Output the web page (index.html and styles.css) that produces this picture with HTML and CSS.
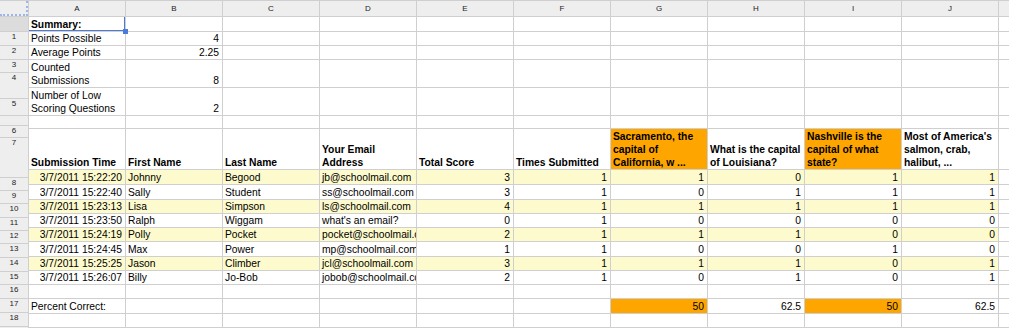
FILE: index.html
```html
<!DOCTYPE html>
<html>
<head>
<meta charset="utf-8">
<title>Form responses</title>
<link rel="stylesheet" href="styles.css">
</head>
<body>
<div class="sheet">
  <div class="gutter">
    <div class="g corner"></div>
    <div class="g dark g14"></div>
    <div class="g g13">1</div>
    <div class="g g13">2</div>
    <div class="g g12">3</div>
    <div class="g g25">4</div>
    <div class="g g16">5</div>
    <div class="g g9"></div>
    <div class="g g11">6</div>
    <div class="g g39">7</div>
    <div class="g g12">8</div>
    <div class="g g12">9</div>
    <div class="g g13">10</div>
    <div class="g g12">11</div>
    <div class="g g12">12</div>
    <div class="g g13">13</div>
    <div class="g g13">14</div>
    <div class="g g12">15</div>
    <div class="g g13">16</div>
    <div class="g g13">17</div>
    <div class="g g13">18</div>
    <div class="g rest"></div>
  </div>
  <div class="grid">
    <div class="row h15">
      <div class="ch">A</div><div class="ch">B</div><div class="ch">C</div><div class="ch">D</div><div class="ch">E</div><div class="ch">F</div><div class="ch">G</div><div class="ch">H</div><div class="ch">I</div><div class="ch">J</div><div class="ch"></div>
    </div>
    <div class="row h14">
      <div class="c b sel">Summary:</div><div class="c"></div><div class="c"></div><div class="c"></div><div class="c"></div><div class="c"></div><div class="c"></div><div class="c"></div><div class="c"></div><div class="c"></div><div class="c"></div>
    </div>
    <div class="row h13">
      <div class="c">Points Possible</div><div class="c n">4</div><div class="c"></div><div class="c"></div><div class="c"></div><div class="c"></div><div class="c"></div><div class="c"></div><div class="c"></div><div class="c"></div><div class="c"></div>
    </div>
    <div class="row h13">
      <div class="c">Average Points</div><div class="c n">2.25</div><div class="c"></div><div class="c"></div><div class="c"></div><div class="c"></div><div class="c"></div><div class="c"></div><div class="c"></div><div class="c"></div><div class="c"></div>
    </div>
    <div class="row h27">
      <div class="c">Counted<br>Submissions</div><div class="c n">8</div><div class="c"></div><div class="c"></div><div class="c"></div><div class="c"></div><div class="c"></div><div class="c"></div><div class="c"></div><div class="c"></div><div class="c"></div>
    </div>
    <div class="row h27">
      <div class="c">Number of Low<br>Scoring Questions</div><div class="c n">2</div><div class="c"></div><div class="c"></div><div class="c"></div><div class="c"></div><div class="c"></div><div class="c"></div><div class="c"></div><div class="c"></div><div class="c"></div>
    </div>
    <div class="row h12">
      <div class="c"></div><div class="c"></div><div class="c"></div><div class="c"></div><div class="c"></div><div class="c"></div><div class="c"></div><div class="c"></div><div class="c"></div><div class="c"></div><div class="c"></div>
    </div>
    <div class="row h40">
      <div class="c b">Submission Time</div>
      <div class="c b">First Name</div>
      <div class="c b">Last Name</div>
      <div class="c b">Your Email<br>Address</div>
      <div class="c b">Total Score</div>
      <div class="c b">Times Submitted</div>
      <div class="c b o">Sacramento, the<br>capital of<br>California, w ...</div>
      <div class="c b">What is the capital<br>of Louisiana?</div>
      <div class="c b o">Nashville is the<br>capital of what<br>state?</div>
      <div class="c b">Most of America's<br>salmon, crab,<br>halibut, ...</div>
      <div class="c"></div>
    </div>
    <div class="row h14 y">
      <div class="c n">3/7/2011 15:22:20</div><div class="c">Johnny</div><div class="c">Begood</div><div class="c">jb@schoolmail.com</div><div class="c n">3</div><div class="c n">1</div><div class="c n">1</div><div class="c n">0</div><div class="c n">1</div><div class="c n">1</div><div class="c k"></div>
    </div>
    <div class="row h14">
      <div class="c n">3/7/2011 15:22:40</div><div class="c">Sally</div><div class="c">Student</div><div class="c">ss@schoolmail.com</div><div class="c n">3</div><div class="c n">1</div><div class="c n">0</div><div class="c n">1</div><div class="c n">1</div><div class="c n">1</div><div class="c k"></div>
    </div>
    <div class="row h13 y">
      <div class="c n">3/7/2011 15:23:13</div><div class="c">Lisa</div><div class="c">Simpson</div><div class="c">ls@schoolmail.com</div><div class="c n">4</div><div class="c n">1</div><div class="c n">1</div><div class="c n">1</div><div class="c n">1</div><div class="c n">1</div><div class="c k"></div>
    </div>
    <div class="row h13">
      <div class="c n">3/7/2011 15:23:50</div><div class="c">Ralph</div><div class="c">Wiggam</div><div class="c">what's an email?</div><div class="c n">0</div><div class="c n">1</div><div class="c n">0</div><div class="c n">0</div><div class="c n">0</div><div class="c n">0</div><div class="c k"></div>
    </div>
    <div class="row h13 y">
      <div class="c n">3/7/2011 15:24:19</div><div class="c">Polly</div><div class="c">Pocket</div><div class="c">pocket@schoolmail.com</div><div class="c n">2</div><div class="c n">1</div><div class="c n">1</div><div class="c n">1</div><div class="c n">0</div><div class="c n">0</div><div class="c k"></div>
    </div>
    <div class="row h14">
      <div class="c n">3/7/2011 15:24:45</div><div class="c">Max</div><div class="c">Power</div><div class="c">mp@schoolmail.com</div><div class="c n">1</div><div class="c n">1</div><div class="c n">0</div><div class="c n">0</div><div class="c n">1</div><div class="c n">0</div><div class="c k"></div>
    </div>
    <div class="row h13 y">
      <div class="c n">3/7/2011 15:25:25</div><div class="c">Jason</div><div class="c">Climber</div><div class="c">jcl@schoolmail.com</div><div class="c n">3</div><div class="c n">1</div><div class="c n">1</div><div class="c n">1</div><div class="c n">0</div><div class="c n">1</div><div class="c k"></div>
    </div>
    <div class="row h13">
      <div class="c n">3/7/2011 15:26:07</div><div class="c">Billy</div><div class="c">Jo-Bob</div><div class="c">jobob@schoolmail.com</div><div class="c n">2</div><div class="c n">1</div><div class="c n">0</div><div class="c n">1</div><div class="c n">0</div><div class="c n">1</div><div class="c k"></div>
    </div>
    <div class="row h13">
      <div class="c"></div><div class="c"></div><div class="c"></div><div class="c"></div><div class="c"></div><div class="c"></div><div class="c"></div><div class="c"></div><div class="c"></div><div class="c"></div><div class="c"></div>
    </div>
    <div class="row h14">
      <div class="c">Percent Correct:</div><div class="c"></div><div class="c"></div><div class="c"></div><div class="c"></div><div class="c"></div><div class="c n o">50</div><div class="c n">62.5</div><div class="c n o">50</div><div class="c n">62.5</div><div class="c"></div>
    </div>
    <div class="row h13">
      <div class="c"></div><div class="c"></div><div class="c"></div><div class="c"></div><div class="c"></div><div class="c"></div><div class="c"></div><div class="c"></div><div class="c"></div><div class="c"></div><div class="c"></div>
    </div>
    <div class="row rest">
      <div class="c"></div><div class="c"></div><div class="c"></div><div class="c"></div><div class="c"></div><div class="c"></div><div class="c"></div><div class="c"></div><div class="c"></div><div class="c"></div><div class="c"></div>
    </div>
  </div>
</div>
</body>
</html>
```
FILE: styles.css
```css
* { box-sizing: border-box; }
html, body { margin: 0; padding: 0; }
body {
  width: 1009px;
  height: 328px;
  overflow: hidden;
  background: #fff;
  font-family: "Liberation Sans", Arial, sans-serif;
  font-size: 10.3px;
  color: #000;
}
.sheet {
  display: flex;
  gap: 1px;
  height: 328px;
  background: #cfcfcf;
}
.gutter {
  width: 28px;
  flex: none;
  display: flex;
  flex-direction: column;
  gap: 1px;
  padding-top: 1px;
}
.g {
  flex: none;
  background: #eeeeee;
  font-size: 8px;
  line-height: 10px;
  text-align: center;
  color: #222;
}
.g.dark { background: #dcdcdc; }
.g.rest { flex: 1; }
.corner {
  height: 15px;
  border-right: 2px dotted #9db6ea;
  border-bottom: 2px dotted #9db6ea;
}
.g9 { height: 9px; }
.g11 { height: 11px; }
.g12 { height: 12px; }
.g13 { height: 13px; }
.g14 { height: 14px; }
.g16 { height: 16px; }
.g25 { height: 25px; }
.g39 { height: 39px; }

.grid {
  flex: 1;
  display: flex;
  flex-direction: column;
  gap: 1px;
  padding-top: 1px;
}
.row {
  flex: none;
  display: grid;
  grid-template-columns: repeat(10, 96px) 1fr;
  column-gap: 1px;
}
.row.rest { flex: 1; }
.h12 { height: 12px; }
.h13 { height: 13px; }
.h14 { height: 14px; }
.h15 { height: 15px; }
.h27 { height: 27px; }
.h40 { height: 40px; }

.ch {
  background: #eeeeee;
  font-size: 8px;
  line-height: 15px;
  text-align: center;
  color: #222;
}
.c {
  background: #fff;
  display: flex;
  flex-direction: column;
  justify-content: flex-end;
  padding: 0 3px 0 2px;
  line-height: 13px;
  white-space: nowrap;
  overflow: hidden;
}
.n { text-align: right; }
.b { font-weight: bold; }
.y .c { background: #fdfbcd; }
.y .c.k { background: #fff; }
.o { background: #ffa500; }

.sel {
  position: relative;
  overflow: visible;
  z-index: 2;
}
.sel::after {
  content: "";
  position: absolute;
  left: 0; top: 0; right: 0; bottom: 0;
  border-right: 1px solid #4a7bd8;
  border-bottom: 1px solid #4a7bd8;
}
.sel::before {
  content: "";
  position: absolute;
  right: -3px;
  bottom: -3px;
  width: 5px;
  height: 5px;
  background: #4a7bd8;
  z-index: 1;
}
```
